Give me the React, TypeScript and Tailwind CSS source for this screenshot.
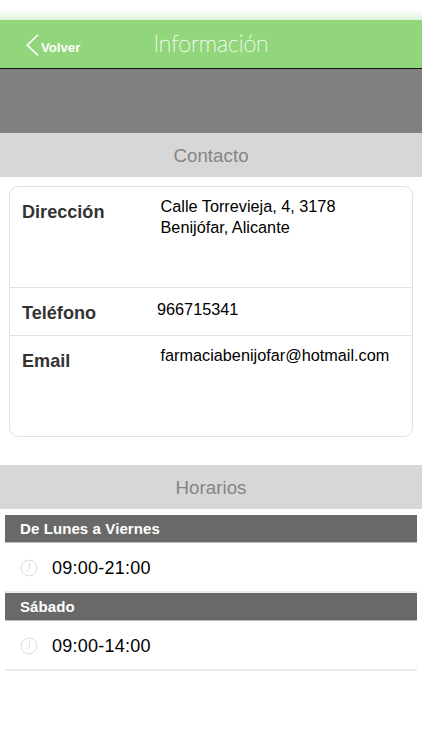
import type { ReactNode } from 'react';

interface SectionTitleProps {
  children: ReactNode;
}

interface ScheduleProps {
  day: string;
  hours: string;
}

function SectionTitle({ children }: SectionTitleProps) {
  return (
    <h2 className="h-11 bg-[#d7d7d7] text-center text-[18.7px] leading-[45px] tracking-[0.05px] text-[#858585]">
      {children}
    </h2>
  );
}

function ClockIcon() {
  return (
    <svg className="ml-[15px] mt-[1px] h-[18px] w-[18px]" viewBox="0 0 18 18" fill="none" stroke="#dcdcdc" aria-hidden="true">
      <circle cx="9" cy="9" r="7.9" />
      <path d="M9.4 3.5v6.2L6.6 12" />
    </svg>
  );
}

function Schedule({ day, hours }: ScheduleProps) {
  return (
    <div className="mx-[5px] h-[78px]">
      <h3 className="h-7 border-b border-[#c6b6b8] bg-[#696969] pl-[15px] text-[15px] font-bold leading-[27px] tracking-[0.1px] text-white">
        {day}
      </h3>
      <div className="flex h-[50px] items-center border-b-2 border-[#ebebeb]">
        <ClockIcon />
        <span className="ml-[14px] mt-[3px] text-[18px] tracking-[0.25px] text-black">{hours}</span>
      </div>
    </div>
  );
}

export default function App() {
  return (
    <div className="h-[750px] w-[422px] overflow-hidden bg-white font-['Liberation_Sans',Arial,sans-serif]">
      <div className="h-5 bg-linear-to-b from-white from-50% to-[#dff2d8]" />
      <header className="grid h-[49px] grid-cols-[1fr_auto_1fr] border-b border-[#111c0e] bg-[#92d67b] text-white">
        <button className="flex h-full items-center pl-[26px]" aria-label="Volver">
          <svg className="mt-[2px] h-[22px] w-[13px]" viewBox="0 0 13 22" fill="none" stroke="currentColor" strokeWidth="1.6" aria-hidden="true">
            <path d="M12 .8 1.3 11.2 12 21.4" />
          </svg>
          <span className="ml-[2px] mt-[8px] text-[13.2px] font-bold">Volver</span>
        </button>
        <h1 className="font-[Lato] text-[23px] font-thin leading-[46px] [-webkit-text-stroke:0.35px_#ffffff]">Información</h1>
      </header>
      <div className="h-16 bg-[#808080]" />

      <SectionTitle>Contacto</SectionTitle>
      <dl className="mx-[9px] mb-[28px] mt-[9px] h-[251px] rounded-[9px] border border-[#e1e1e1] text-[16.25px] leading-[21px] text-black">
        <div className="flex h-[101px] border-b border-[#e1e1e1]">
          <dt className="w-[150px] pl-3 pt-[15px] text-[18.1px] font-bold text-[#333]">Dirección</dt>
          <dd className="pl-[0.5px] pt-[9px]">
            Calle Torrevieja, 4, 3178
            <br />
            Benijófar, Alicante
          </dd>
        </div>
        <div className="flex h-12 border-b border-[#e1e1e1]">
          <dt className="w-[147px] pl-3 pt-[15px] text-[18.1px] font-bold text-[#333]">Teléfono</dt>
          <dd className="pt-[11px]">966715341</dd>
        </div>
        <div className="flex">
          <dt className="w-[150px] pl-3 pt-[15px] text-[18.1px] font-bold text-[#333]">Email</dt>
          <dd className="pl-[0.5px] pt-[9px]">farmaciabenijofar@hotmail.com</dd>
        </div>
      </dl>

      <SectionTitle>Horarios</SectionTitle>
      <div className="mt-[6px]">
        <Schedule day="De Lunes a Viernes" hours="09:00-21:00" />
        <Schedule day="Sábado" hours="09:00-14:00" />
      </div>
    </div>
  );
}
